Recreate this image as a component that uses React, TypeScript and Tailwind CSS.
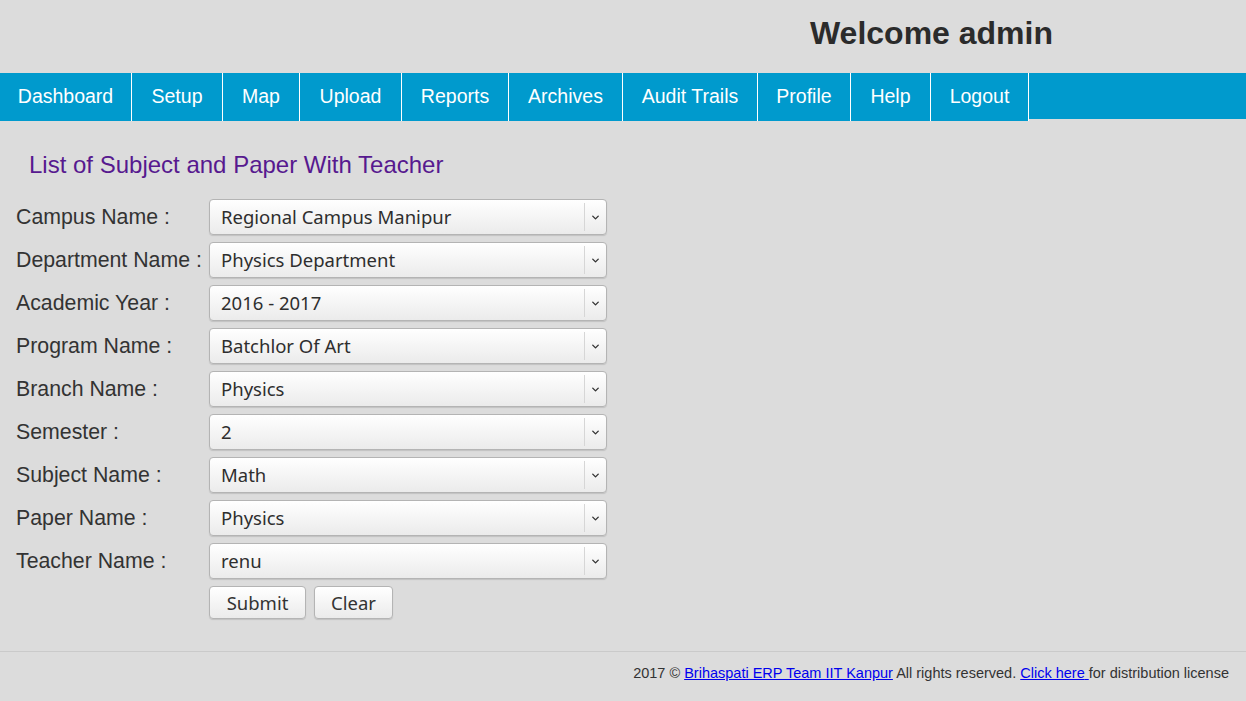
import { ChevronDown } from 'lucide-react';

const navItems: { label: string; w: string }[] = [
  { label: 'Dashboard', w: 'w-[132px]' },
  { label: 'Setup', w: 'w-[91px]' },
  { label: 'Map', w: 'w-[77px]' },
  { label: 'Upload', w: 'w-[102px]' },
  { label: 'Reports', w: 'w-[107px]' },
  { label: 'Archives', w: 'w-[114px]' },
  { label: 'Audit Trails', w: 'w-[135px]' },
  { label: 'Profile', w: 'w-[93px]' },
  { label: 'Help', w: 'w-[80px]' },
  { label: 'Logout', w: 'w-[98px]' },
];

const fields: { label: string; value: string }[] = [
  { label: 'Campus Name :', value: 'Regional Campus Manipur' },
  { label: 'Department Name :', value: 'Physics Department' },
  { label: 'Academic Year :', value: '2016 - 2017' },
  { label: 'Program Name :', value: 'Batchlor Of Art' },
  { label: 'Branch Name :', value: 'Physics' },
  { label: 'Semester :', value: '2' },
  { label: 'Subject Name :', value: 'Math' },
  { label: 'Paper Name :', value: 'Physics' },
  { label: 'Teacher Name :', value: 'renu' },
];

const sans = { fontFamily: '"Liberation Sans", Arial, sans-serif' };
const ui = { fontFamily: '"Noto Sans", "Open Sans", sans-serif' };

function SelectBox({ value }: { value: string }) {
  return (
    <div
      className="flex h-[36px] w-[398px] items-center rounded-[4px] border border-[#b4b4b4] bg-gradient-to-b from-white to-[#ebebeb] shadow-[0_1px_1px_rgba(0,0,0,0.12)]"
      style={ui}
    >
      <span className="flex-1 pl-[11px] text-[18.5px] leading-none text-[#2e2e2e]">{value}</span>
      <span className="h-[28px] w-px bg-[#d6d6d6]" />
      <span className="flex w-[21px] items-center justify-center text-[#333]">
        <ChevronDown size={11} strokeWidth={3} />
      </span>
    </div>
  );
}

function Button({ children, width }: { children: string; width: string }) {
  return (
    <button
      className={`h-[33px] ${width} rounded-[4px] border border-[#b4b4b4] bg-gradient-to-b from-white to-[#ebebeb] text-[18.5px] text-[#333] shadow-[0_1px_1px_rgba(0,0,0,0.12)]`}
      style={ui}
    >
      {children}
    </button>
  );
}

export default function App() {
  return (
    <div className="min-h-[701px] bg-[#dcdcdc]" style={sans}>
      {/* header */}
      <div className="flex h-[73px] items-start justify-end pr-[193px] pt-[13px]">
        <h1 className="text-[32px] font-bold leading-[40px] text-[#2b2b2b]">Welcome admin</h1>
      </div>

      {/* nav */}
      <ul className="flex h-[46px] bg-[#009acd]">
        {navItems.map((item) => (
          <li
            key={item.label}
            className={`flex h-[48px] ${item.w} items-center justify-center border-r border-white bg-[#009acd] text-[19.5px] text-white last:border-r-0`}
          >
            {item.label}
          </li>
        ))}
        <li className="flex-1 bg-[#009acd]" />
      </ul>

      {/* content */}
      <div className="px-[16px] pt-[28px]">
        <h2 className="pl-[13px] text-[24px] text-[#57198f]">List of Subject and Paper With Teacher</h2>

        <div className="mt-[16px] flex flex-col gap-[7px]">
          {fields.map((f) => (
            <div key={f.label} className="flex items-center">
              <label className="w-[193px] pt-[2px] text-[21.3px] text-[#333]">{f.label}</label>
              <SelectBox value={f.value} />
            </div>
          ))}
          <div className="flex gap-[8px] pl-[193px]">
            <Button width="w-[97px]">Submit</Button>
            <Button width="w-[79px]">Clear</Button>
          </div>
        </div>
      </div>

      {/* footer */}
      <div className="mt-[32px] border-t border-[#cacaca] pr-[17px] pt-[11px] text-right text-[14.5px] text-[#333]">
        2017 ©{' '}
        <a href="#" className="text-[#0000ee] underline">
          Brihaspati ERP Team IIT Kanpur
        </a>{' '}
        All rights reserved.{' '}
        <a href="#" className="text-[#0000ee] underline">
          Click here{' '}
        </a>
        for distribution license
      </div>
    </div>
  );
}
